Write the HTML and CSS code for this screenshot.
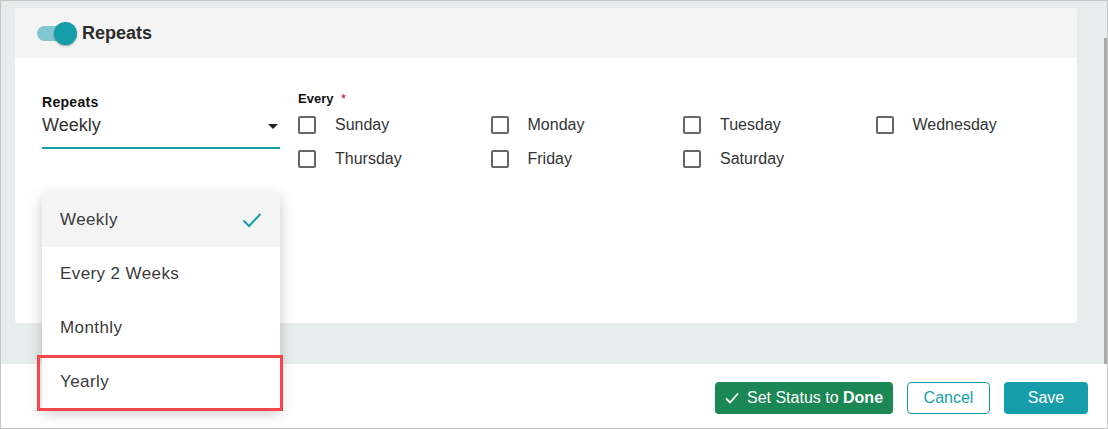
FILE: index.html
```html
<!DOCTYPE html>
<html lang="en">
<head>
    <meta charset="UTF-8">
    <meta name="viewport" content="width=device-width, initial-scale=1.0">
    <title>Repeats</title>
    <link rel="stylesheet" href="styles.css">
</head>
<body>
    <div class="frame">
        <div class="main">
            <div class="card">
                <div class="card-header">
                    <span class="toggle"><span class="knob"></span></span>
                    <h2>Repeats</h2>
                </div>
                <div class="card-body">
                    <div class="field">
                        <label>Repeats</label>
                        <div class="select">
                            <span>Weekly</span>
                            <span class="caret"></span>
                        </div>

                        <ul class="menu">
                            <li class="selected">Weekly
                                <svg class="tick" width="20" height="16" viewBox="0 0 20 16"><path d="M1.5 8.5 L7 14 L18.5 2" fill="none" stroke="#159ea9" stroke-width="2"/></svg>
                            </li>
                            <li>Every 2 Weeks</li>
                            <li>Monthly</li>
                            <li class="marked">Yearly<span class="highlight"></span></li>
                        </ul>
                    </div>

                    <div class="days">
                        <div class="days-label">Every <span class="req">*</span></div>
                        <div class="days-grid">
                            <label class="day"><span class="box"></span>Sunday</label>
                            <label class="day"><span class="box"></span>Monday</label>
                            <label class="day"><span class="box"></span>Tuesday</label>
                            <label class="day"><span class="box"></span>Wednesday</label>
                            <label class="day"><span class="box"></span>Thursday</label>
                            <label class="day"><span class="box"></span>Friday</label>
                            <label class="day"><span class="box"></span>Saturday</label>
                        </div>
                    </div>
                </div>
            </div>
            <div class="scrollbar"></div>
        </div>

        <div class="footer">
            <button class="btn btn-done">
                <svg width="14" height="12" viewBox="0 0 14 12"><path d="M1 6.5 L5 10.5 L13 1.5" fill="none" stroke="#fff" stroke-width="1.8"/></svg>
                <span>Set Status to <b>Done</b></span>
            </button>
            <button class="btn btn-cancel">Cancel</button>
            <button class="btn btn-save">Save</button>
        </div>
    </div>
</body>
</html>
```

FILE: styles.css
```css
body {
    margin: 0;
    font-family: 'Liberation Sans', Arial, sans-serif;
    color: #333;
}

.frame {
    width: 1108px;
    height: 429px;
    box-sizing: border-box;
    border: 1px solid #c6c6c6;
    display: flex;
    flex-direction: column;
    position: relative;
}

.main {
    background: #e9ecec;
    height: 363px;
    padding: 7px 30px 0 14px;
    box-sizing: border-box;
    position: relative;
}

.scrollbar {
    position: absolute;
    right: 0;
    top: 37px;
    bottom: 0;
    width: 3px;
    background: #a9a9a9;
}

.card {
    background: #fff;
    border-radius: 4px;
    height: 315px;
}

.card-header {
    background: #f4f4f4;
    height: 50px;
    border-radius: 4px 4px 0 0;
    display: flex;
    align-items: center;
    padding-left: 22px;
}

.card-header h2 {
    margin: 0 0 0 13px;
    font-size: 18px;
    font-weight: bold;
    color: #2b2b2b;
}

.toggle {
    width: 32px;
    height: 15px;
    border-radius: 8px;
    background: #80c7cf;
    position: relative;
}

.toggle .knob {
    position: absolute;
    right: -8px;
    top: -4px;
    width: 23px;
    height: 23px;
    border-radius: 50%;
    background: #149ca8;
    box-shadow: 0 1px 2px rgba(0, 0, 0, 0.35);
}

.card-body {
    display: flex;
    padding-left: 27px;
}

.field {
    width: 238px;
    padding-top: 36px;
    position: relative;
}

.field label {
    display: block;
    font-size: 14px;
    line-height: 16px;
    font-weight: bold;
    color: #111;
    letter-spacing: 0.3px;
}

.select {
    margin-top: 3px;
    display: flex;
    justify-content: space-between;
    align-items: center;
    font-size: 18px;
    line-height: 24px;
    padding-bottom: 10px;
    border-bottom: 2px solid #159ea9;
    color: #333;
}

.caret {
    width: 0;
    height: 0;
    border-left: 5px solid transparent;
    border-right: 5px solid transparent;
    border-top: 5px solid #222;
    margin-right: 2px;
    margin-top: 2px;
}

.menu {
    position: absolute;
    left: 0;
    top: 135px;
    width: 238px;
    margin: 0;
    padding: 0;
    list-style: none;
    background: #fff;
    border-radius: 4px;
    box-shadow: 0 4px 14px rgba(0, 0, 0, 0.22);
    z-index: 2;
}

.menu li {
    height: 54px;
    display: flex;
    align-items: center;
    justify-content: space-between;
    padding: 0 18px;
    font-size: 17px;
    letter-spacing: 0.4px;
    color: #3a3a3a;
    position: relative;
}

.menu li.selected {
    background: #f4f4f4;
    border-radius: 4px 4px 0 0;
}

.menu .highlight {
    position: absolute;
    left: -5px;
    top: 0;
    width: 246px;
    height: 56px;
    box-sizing: border-box;
    border: 3px solid #f2474b;
}

.days {
    margin-left: 18px;
    padding-top: 33px;
}

.days-label {
    font-size: 13px;
    line-height: 16px;
    font-weight: bold;
    color: #111;
}

.req {
    color: #d0021b;
    font-weight: normal;
    margin-left: 4px;
}

.days-grid {
    margin-top: 9px;
    display: grid;
    grid-template-columns: repeat(4, 192.5px);
    row-gap: 16px;
}

.day {
    display: flex;
    align-items: center;
    font-size: 16px;
    color: #333;
    height: 18px;
}

.box {
    width: 18px;
    height: 18px;
    box-sizing: border-box;
    border: 2px solid #666;
    border-radius: 2px;
    margin-right: 19px;
}

.footer {
    flex: 1;
    background: #fff;
    display: flex;
    justify-content: flex-end;
    align-items: flex-start;
    gap: 14px;
    padding: 18px 19px 0 0;
}

.btn {
    height: 32px;
    border-radius: 4px;
    font-family: 'Liberation Sans', Arial, sans-serif;
    font-size: 16px;
    border: 1px solid transparent;
    cursor: pointer;
    display: flex;
    align-items: center;
    justify-content: center;
}

.btn-done {
    width: 178px;
    background: #1a8754;
    color: #fff;
    gap: 8px;
}

.btn-cancel {
    width: 83px;
    background: #fff;
    border-color: #159ea9;
    color: #159ea9;
}

.btn-save {
    width: 84px;
    background: #159ea9;
    color: #fff;
}
```
